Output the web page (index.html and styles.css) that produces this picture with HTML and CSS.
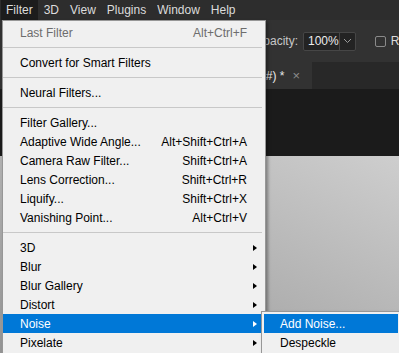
FILE: index.html
```html
<!DOCTYPE html>
<html lang="en">
<head>
    <meta charset="UTF-8">
    <meta name="viewport" content="width=device-width, initial-scale=1.0">
    <title>Filter Menu</title>
    <link rel="stylesheet" href="styles.css">
</head>
<body>
    <div class="app">
        <div class="menubar">
            <span class="menubar-item active">Filter</span>
            <span class="menubar-item">3D</span>
            <span class="menubar-item">View</span>
            <span class="menubar-item">Plugins</span>
            <span class="menubar-item">Window</span>
            <span class="menubar-item">Help</span>
        </div>

        <div class="options">
            <span class="opt-label">Opacity:</span>
            <div class="opt-field">
                <span class="opt-value">100%</span>
                <span class="opt-drop">
                    <svg width="9" height="6" viewBox="0 0 9 6"><path d="M1 1l3.5 3.5L8 1" fill="none" stroke="#9a9a9a" stroke-width="1"/></svg>
                </span>
            </div>
            <span class="opt-divider"></span>
            <span class="opt-check"></span>
            <span class="opt-text">R</span>
        </div>

        <div class="tabs">
            <div class="tab">
                <span class="tab-title">Untitled-1 @ 100% (RGB/8#) *</span>
                <span class="tab-close">&times;</span>
            </div>
        </div>

        <div class="workspace"></div>
        <div class="canvas"></div>
    </div>

    <div class="menu">
        <div class="menu-row disabled"><span>Last Filter</span><span class="key">Alt+Ctrl+F</span><span></span></div>
        <div class="menu-sep"></div>
        <div class="menu-row"><span>Convert for Smart Filters</span><span class="key"></span><span></span></div>
        <div class="menu-sep"></div>
        <div class="menu-row"><span>Neural Filters...</span><span class="key"></span><span></span></div>
        <div class="menu-sep"></div>
        <div class="menu-row"><span>Filter Gallery...</span><span class="key"></span><span></span></div>
        <div class="menu-row"><span>Adaptive Wide Angle...</span><span class="key">Alt+Shift+Ctrl+A</span><span></span></div>
        <div class="menu-row"><span>Camera Raw Filter...</span><span class="key">Shift+Ctrl+A</span><span></span></div>
        <div class="menu-row"><span>Lens Correction...</span><span class="key">Shift+Ctrl+R</span><span></span></div>
        <div class="menu-row"><span>Liquify...</span><span class="key">Shift+Ctrl+X</span><span></span></div>
        <div class="menu-row"><span>Vanishing Point...</span><span class="key">Alt+Ctrl+V</span><span></span></div>
        <div class="menu-sep"></div>
        <div class="menu-row"><span>3D</span><span class="key"></span><span class="arrow"></span></div>
        <div class="menu-row"><span>Blur</span><span class="key"></span><span class="arrow"></span></div>
        <div class="menu-row"><span>Blur Gallery</span><span class="key"></span><span class="arrow"></span></div>
        <div class="menu-row"><span>Distort</span><span class="key"></span><span class="arrow"></span></div>
        <div class="menu-row selected"><span>Noise</span><span class="key"></span><span class="arrow"></span></div>
        <div class="menu-row"><span>Pixelate</span><span class="key"></span><span class="arrow"></span></div>
    </div>

    <div class="submenu">
        <div class="menu-row selected"><span>Add Noise...</span></div>
        <div class="menu-row"><span>Despeckle</span></div>
    </div>
</body>
</html>
```

FILE: styles.css
```css
body {
    font-family: "Liberation Sans", Arial, sans-serif;
    font-size: 12px;
    margin: 0;
    padding: 0;
    background-color: #1b1b1b;
    width: 399px;
    height: 353px;
    overflow: hidden;
    position: relative;
}

.app {
    display: flex;
    flex-direction: column;
    height: 353px;
}

/* top menu bar */
.menubar {
    display: flex;
    height: 20px;
    padding-left: 1px;
    background-color: #2d2d2d;
}

.menubar-item {
    padding: 0 5px;
    margin-right: 1px;
    line-height: 20px;
    color: #dcdcdc;
}

.menubar-item.active {
    background-color: #1c1c1c;
}

/* options bar */
.options {
    display: flex;
    align-items: center;
    height: 42px;
    padding-left: 254px;
    background-color: #323232;
    color: #c8c8c8;
    white-space: nowrap;
}

.opt-field {
    display: flex;
    margin-left: 5px;
    width: 54px;
    height: 19px;
    box-sizing: border-box;
    border: 1px solid #464646;
    border-radius: 2px;
    background-color: #232323;
}

.opt-value {
    flex: 1;
    padding-left: 4px;
    line-height: 17px;
    color: #ececec;
}

.opt-drop {
    width: 15px;
    border-left: 1px solid #464646;
    display: flex;
    align-items: center;
    justify-content: center;
}

.opt-divider {
    width: 1px;
    height: 28px;
    margin: 0 9px 0 10px;
    background-color: #262626;
}

.opt-check {
    width: 11px;
    height: 11px;
    box-sizing: border-box;
    border: 1px solid #8a8a8a;
    border-radius: 2px;
    flex-shrink: 0;
}

.opt-text {
    margin-left: 5px;
    color: #dcdcdc;
}

/* document tabs */
.tabs {
    display: flex;
    height: 27px;
    background-color: #282828;
}

.tab {
    display: flex;
    align-items: center;
    justify-content: flex-end;
    width: 312px;
    padding-right: 12px;
    box-sizing: border-box;
    background-color: #323232;
    white-space: nowrap;
    overflow: hidden;
}

.tab-title {
    color: #e8e8e8;
}

.tab-close {
    margin-left: 8px;
    color: #8c8c8c;
    font-size: 13px;
}

.workspace {
    height: 67px;
    background-color: #1b1b1b;
}

.canvas {
    flex: 1;
    background: linear-gradient(to bottom left, #cecece, #959595);
}

/* dropdown menus */
.menu,
.submenu {
    position: absolute;
    box-sizing: border-box;
    background-color: #f0f0f0;
    border: 1px solid #979797;
    box-shadow: 2px 2px 3px rgba(0, 0, 0, 0.35);
    color: #000;
}

.menu {
    left: 2px;
    top: 20px;
    width: 264px;
    padding: 2px 3px 2px 0;
}

.submenu {
    left: 261px;
    top: 311px;
    width: 140px;
    padding: 2px 2px;
}

.menu-row {
    display: grid;
    grid-template-columns: 1fr auto 15px;
    align-items: center;
    height: 19px;
    padding-left: 17px;
    white-space: nowrap;
}

.submenu .menu-row {
    display: flex;
    padding-left: 16px;
}

.menu-row.disabled {
    color: #6d6d6d;
}

.menu-row.selected {
    background-color: #0078d7;
    color: #fff;
}

.menu-sep {
    height: 1px;
    margin: 5px 0;
    background-color: #c8c8c8;
}

.arrow {
    width: 0;
    height: 0;
    margin-left: 6px;
    border-left: 4px solid #000;
    border-top: 3.5px solid transparent;
    border-bottom: 3.5px solid transparent;
}

.menu-row.selected .arrow {
    border-left-color: #fff;
}
```
